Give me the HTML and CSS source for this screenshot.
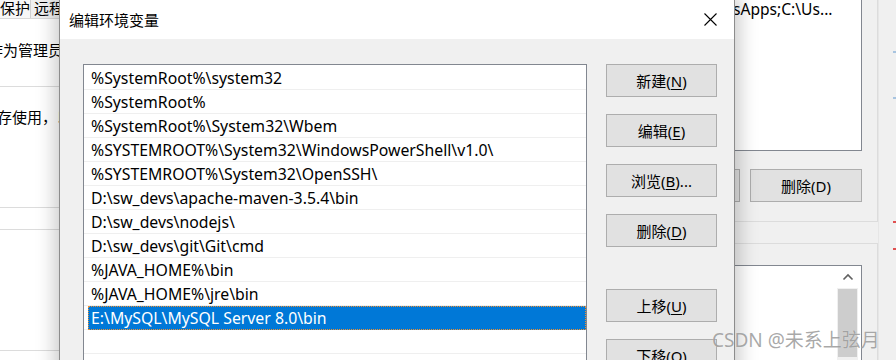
FILE: index.html
```html
<!DOCTYPE html>
<html lang="zh-CN">
<head>
<meta charset="utf-8">
<title>编辑环境变量</title>
<link rel="stylesheet" href="styles.css">
</head>
<body>
<div class="page">
  <div class="bg">
    <div class="bg-left">
      <div class="tabs">
        <span class="tab tab-a">保护</span>
        <span class="tab tab-b">远程</span>
      </div>
      <div class="left-sec1"><span class="clip-text t1">作为管理员</span></div>
      <div class="left-sec2"><span class="clip-text t2">内存使用，以</span></div>
      <div class="left-sec3"></div>
      <div class="left-sec4"></div>
    </div>
    <div class="bg-gap"></div>
    <div class="bg-right">
      <div class="bg-main">
        <div class="group1">
          <div class="textbox"><span class="tb-text">sApps;C:\Us...</span></div>
          <div class="bg-btns">
            <div class="bg-btn bg-btn-partial"></div>
            <div class="bg-btn">删除(D)</div>
          </div>
        </div>
        <div class="group2">
          <div class="lower-list">
            <div class="ll-content"></div>
            <div class="scrollbar">
              <div class="sb-up">
                <svg width="12" height="8" viewBox="0 0 12 8"><path d="M1.5 6.5 L6 2 L10.5 6.5" fill="none" stroke="#606060" stroke-width="1.6"/></svg>
              </div>
              <div class="sb-thumb"></div>
            </div>
          </div>
        </div>
      </div>
      <div class="edge">
        <span class="mark mark-blue m1"></span>
        <span class="mark mark-blue m2"></span>
        <span class="mark mark-red m3"></span>
        <span class="mark mark-red m4"></span>
      </div>
    </div>
  </div>

  <div class="dialog">
    <div class="titlebar">
      <span class="title">编辑环境变量</span>
      <span class="close">
        <svg width="13" height="13" viewBox="0 0 13 13"><path d="M0.5 0.5 L12.5 12.5 M12.5 0.5 L0.5 12.5" stroke="#000" stroke-width="1.1" fill="none"/></svg>
      </span>
    </div>
    <div class="dbody">
      <div class="listbox">
        <div class="row">%SystemRoot%\system32</div>
        <div class="row">%SystemRoot%</div>
        <div class="row">%SystemRoot%\System32\Wbem</div>
        <div class="row">%SYSTEMROOT%\System32\WindowsPowerShell\v1.0\</div>
        <div class="row">%SYSTEMROOT%\System32\OpenSSH\</div>
        <div class="row">D:\sw_devs\apache-maven-3.5.4\bin</div>
        <div class="row">D:\sw_devs\nodejs\</div>
        <div class="row">D:\sw_devs\git\Git\cmd</div>
        <div class="row">%JAVA_HOME%\bin</div>
        <div class="row">%JAVA_HOME%\jre\bin</div>
        <div class="row row-sel"><span class="sel">E:\MySQL\MySQL Server 8.0\bin</span></div>
        <div class="row"></div>
      </div>
      <div class="buttons">
        <div class="btn">新建(<u>N</u>)</div>
        <div class="btn">编辑(<u>E</u>)</div>
        <div class="btn">浏览(<u>B</u>)...</div>
        <div class="btn">删除(<u>D</u>)</div>
        <div class="btn btn-gap">上移(<u>U</u>)</div>
        <div class="btn">下移(<u>O</u>)</div>
      </div>
    </div>
  </div>

  <div class="watermark">CSDN @未系上弦月</div>
</div>
</body>
</html>
```

FILE: styles.css
```css
* { box-sizing: border-box; }
html, body { margin: 0; padding: 0; }
body {
  width: 896px;
  height: 360px;
  overflow: hidden;
  font-family: "Noto Sans", "Noto Sans CJK SC", sans-serif;
  font-size: 15px;
  color: #000;
  background: #f0f0f0;
}
.page {
  position: relative;
  width: 896px;
  height: 360px;
  overflow: hidden;
}

/* ---------- background window ---------- */
.bg {
  display: flex;
  width: 896px;
  height: 360px;
}
.bg-left {
  width: 59px;
  flex: none;
  background: #fff;
  display: flex;
  flex-direction: column;
  overflow: hidden;
}
.tabs {
  height: 19px;
  display: flex;
  border-bottom: 1px solid #d9d9d9;
  background: #f0f0f0;
  flex: none;
}
.tab {
  height: 18px;
  line-height: 17px;
  white-space: nowrap;
  font-size: 15px;
}
.tab-a {
  width: 34px;
  background: #f7f7f7;
  border-right: 1px solid #d0d0d0;
  padding-left: 0;
}
.tab-b {
  padding-left: 3px;
  background: #f0f0f0;
}
.clip-text {
  display: block;
  white-space: nowrap;
  line-height: 20px;
}
.left-sec1 {
  height: 68px;
  border-bottom: 1px solid #dcdcdc;
  padding-top: 21px;
  flex: none;
}
.t1 { margin-left: -12px; }
.left-sec2 {
  height: 121px;
  border-bottom: 1px solid #dcdcdc;
  padding-top: 20px;
  flex: none;
}
.t2 { margin-left: -18px; }
.left-sec3 {
  height: 22px;
  border-bottom: 1px solid #dcdcdc;
  flex: none;
}
.left-sec4 {
  height: 121px;
  border-bottom: 1px solid #dcdcdc;
  flex: none;
}
.bg-gap {
  width: 676px;
  flex: none;
}
.bg-right {
  width: 161px;
  flex: none;
  display: flex;
}
.bg-main {
  width: 143px;
  flex: none;
  display: flex;
  flex-direction: column;
}
.group1 {
  height: 222px;
  border-right: 1px solid #dcdcdc;
  border-bottom: 1px solid #dcdcdc;
  flex: none;
}
.textbox {
  width: 127px;
  height: 151px;
  background: #fff;
  border-right: 1px solid #828790;
  border-bottom: 1px solid #828790;
  overflow: hidden;
}
.tb-text {
  display: block;
  white-space: nowrap;
  line-height: 18px;
  margin-left: -2px;
  font-size: 15.6px;
}
.bg-btns {
  display: flex;
  margin-top: 18px;
  gap: 10px;
}
.bg-btn {
  height: 33px;
  width: 112px;
  background: #e1e1e1;
  border: 1px solid #adadad;
  display: flex;
  align-items: center;
  justify-content: center;
  font-size: 15px;
}
.bg-btn-partial {
  width: 5px;
  border-left: none;
}
.group2 {
  margin-top: 21px;
  flex: 1;
  border-top: 1px solid #dcdcdc;
  border-right: 1px solid #dcdcdc;
  padding-top: 21px;
}
.lower-list {
  width: 127px;
  height: 120px;
  background: #fff;
  border-top: 1px solid #828790;
  border-right: 1px solid #828790;
  display: flex;
}
.ll-content { flex: 1; }
.scrollbar {
  width: 21px;
  margin-right: 3px;
  background: #f0f0f0;
  display: flex;
  flex-direction: column;
  flex: none;
}
.sb-up {
  height: 22px;
  display: flex;
  align-items: center;
  justify-content: center;
  background: #fff;
}
.sb-thumb {
  margin: 1px 1px 0 1px;
  height: 68px;
  background: #cdcdcd;
}
.edge {
  width: 18px;
  flex: none;
  display: flex;
  flex-direction: column;
  align-items: flex-end;
  border-left: 1px solid #e6e6e6;
}
.mark {
  display: block;
  width: 3px;
  height: 2px;
}
.mark-blue { background: #a8c4e0; }
.mark-red { background: #e05050; }
.m1 { margin-top: 51px; }
.m2 { margin-top: 44px; }
.m3 { margin-top: 122px; }
.m4 { margin-top: 25px; }

/* ---------- dialog ---------- */
.dialog {
  position: absolute;
  left: 59px;
  top: 0;
  width: 676px;
  height: 390px;
  border-left: 1px solid #8c8c8c;
  border-right: 1px solid #8c8c8c;
  background: #f0f0f0;
  box-shadow: 0 0 18px 4px rgba(0, 0, 0, 0.22);
  display: flex;
  flex-direction: column;
}
.titlebar {
  height: 39px;
  background: #fff;
  display: flex;
  align-items: center;
  justify-content: space-between;
  padding-left: 9px;
  flex: none;
}
.title {
  font-size: 15px;
  line-height: 20px;
}
.close {
  width: 46px;
  height: 39px;
  display: flex;
  align-items: center;
  justify-content: center;
  margin-right: 1px;
}
.dbody {
  display: flex;
  padding: 25px 0 0 23px;
  gap: 19px;
}
.listbox {
  width: 504px;
  height: 330px;
  background: #fff;
  border: 1px solid #828790;
  padding-top: 1px;
  flex: none;
}
.row {
  height: 24px;
  border-bottom: 1px solid #efefef;
  padding-left: 7px;
  padding-top: 2px;
  line-height: 21px;
  white-space: nowrap;
  font-size: 15.8px;
}
.row-sel {
  padding-left: 4px;
  padding-top: 0;
  padding-right: 0;
}
.sel {
  display: block;
  height: 24px;
  margin-bottom: -1px;
  background: #0078d7;
  color: #fff;
  padding-left: 2px;
  padding-top: 1px;
  border: 1px dotted #f09030;
  line-height: 21px;
}
.buttons {
  display: flex;
  flex-direction: column;
  gap: 17px;
}
.btn {
  width: 111px;
  height: 33px;
  background: #e1e1e1;
  border: 1px solid #adadad;
  display: flex;
  align-items: center;
  justify-content: center;
  font-size: 15px;
}
.btn u { text-underline-offset: 2px; }
.btn-gap { margin-top: 25px; }

/* ---------- watermark ---------- */
.watermark {
  position: absolute;
  left: 712px;
  top: 327px;
  font-size: 19px;
  line-height: 26px;
  color: rgba(140, 140, 140, 0.75);
  white-space: nowrap;
  text-shadow: 0 0 1px rgba(255,255,255,0.6);
}
```
